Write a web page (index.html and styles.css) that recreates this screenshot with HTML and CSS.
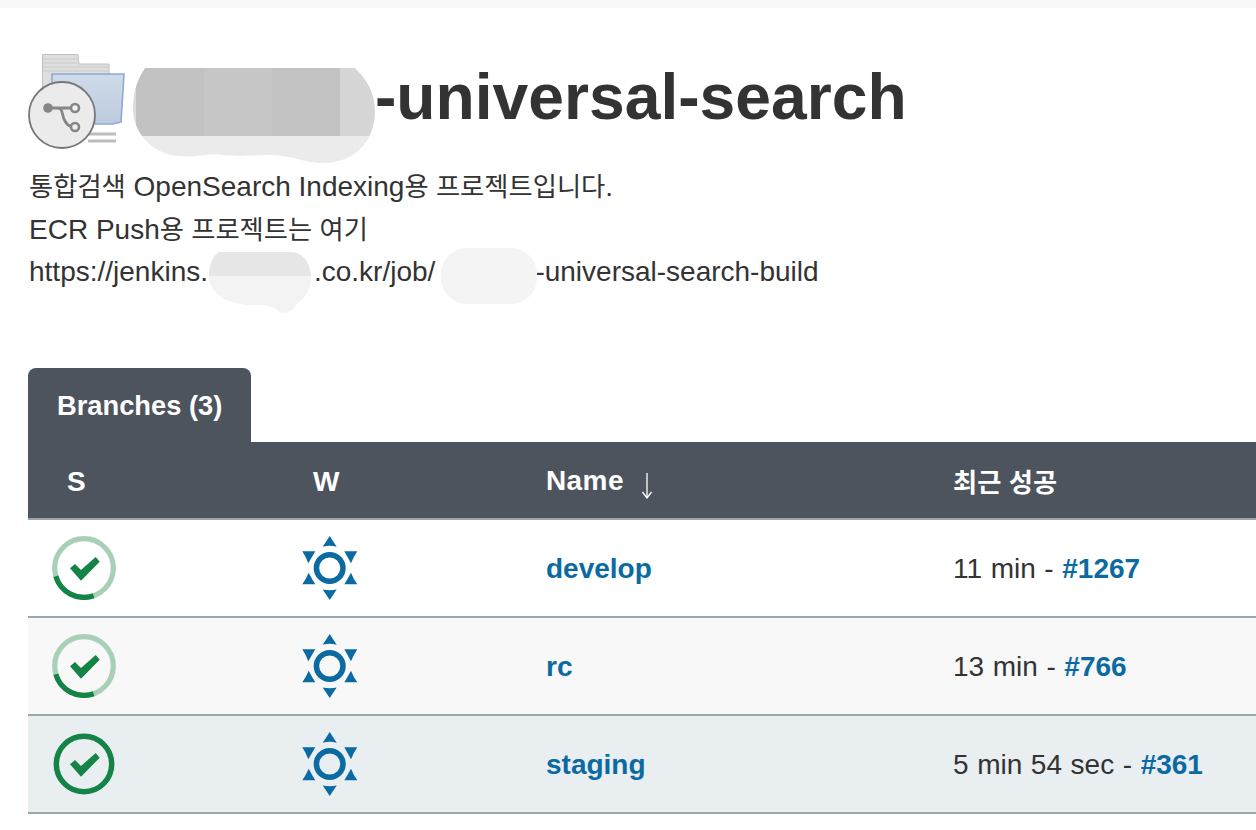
FILE: index.html
```html
<!DOCTYPE html>
<html lang="ko">
<head>
<meta charset="utf-8">
<title>universal-search</title>
<link rel="stylesheet" href="styles.css">
</head>
<body>
<div class="topbar"></div>
<main class="page">
  <h1 class="title">
    <span class="job-icon">
      <svg width="100" height="100" viewBox="0 0 100 100">
        <defs>
          <linearGradient id="fold" x1="0" y1="0" x2="0" y2="1"><stop offset="0" stop-color="#cfdbea"/><stop offset="1" stop-color="#bccbde"/></linearGradient>
        </defs>
        <path d="M14.500 4.500H50L51 14H81V50H14.500z" fill="#dedede" stroke="#c0c0c0"/>
        <path d="M15 9H49M15 13H49M15 17H80M15 21H80" stroke="#cbcbcb"/>
        <path d="M24 24H96L93 72L84 74H40L24 60z" fill="url(#fold)" stroke="#8fa9d6" stroke-width="1.600"/>
        <path d="M60 84H88M60 91H88" stroke="#bdbdbd" stroke-width="3"/>
        <circle cx="34" cy="65" r="33" fill="#ebebeb" stroke="#777" stroke-width="1.800"/>
        <path d="M20 58H47M29 58C36 58 33 65 37 71C39 75 43 77 47 77" fill="none" stroke="#868686" stroke-width="2.800"/>
        <circle cx="20" cy="58" r="4.800" fill="#868686"/>
        <circle cx="47" cy="58" r="4" fill="#f0f0f0" stroke="#868686" stroke-width="2.600"/>
        <circle cx="47" cy="77" r="4" fill="#f0f0f0" stroke="#868686" stroke-width="2.600"/>
      </svg>
    </span>
    <span class="redact-title">
      <svg width="242" height="114" viewBox="0 0 242 114">
        <defs>
          <clipPath id="blob"><path d="M12 18H222C234 30 242 42 242 62C242 86 226 113 190 113C170 113 160 105 135 105C120 105 110 107 90 105C70 103 65 108 45 106C20 104 0 84 0 58C0 42 4 30 12 18z"/></clipPath>
        </defs>
        <g clip-path="url(#blob)">
          <rect x="0" y="86" width="242" height="28" fill="#ebebeb"/>
          <rect x="3" y="18" width="68" height="68" fill="#c2c2c2"/>
          <rect x="71" y="18" width="68" height="68" fill="#c6c6c6"/>
          <rect x="139" y="18" width="68" height="68" fill="#c3c3c3"/>
          <rect x="207" y="18" width="35" height="68" fill="#d6d6d6"/>
          <rect x="0" y="18" width="3" height="68" fill="#dcdcdc"/>
        </g>
      </svg>
    </span><span class="title-text">-universal-search</span>
  </h1>
  <div class="desc">
    <p class="desc-line"><span class="ko">통합검색</span> OpenSearch Indexing<span class="ko">용 프로젝트입니다</span>.</p>
    <p class="desc-line">ECR Push<span class="ko">용 프로젝트는 여기</span></p>
    <p class="desc-line">https://jenkins.<span class="redact redact-a"><svg width="102" height="62" viewBox="0 0 102 62"><defs><clipPath id="ba"><path d="M10 0H82C94 0 102 12 102 26C102 42 92 48 88 52C84 60 76 62 70 60C66 55 60 53 44 53C22 53 0 44 0 24C0 12 4 4 10 0z"/></clipPath></defs><g clip-path="url(#ba)"><rect width="102" height="24" fill="#e6e6e6"/><rect y="24" width="102" height="38" fill="#f3f3f3"/></g></svg></span>.co.kr/job/<span class="redact redact-b"><svg width="96" height="56" viewBox="0 0 96 56"><rect width="96" height="56" rx="26" fill="#f4f4f4"/></svg></span>-universal-search-build</p>
  </div>
  <section class="panel">
    <div class="tab">Branches (3)</div>
    <table class="runs">
      <thead>
        <tr>
          <th class="col-s">S</th>
          <th class="col-w">W</th>
          <th class="col-n"><span class="name-head">Name</span> <svg class="sort" width="12" height="26" viewBox="0 0 12 26"><path d="M6 0V24M1.500 19L6 25L10.500 19" fill="none" stroke="#fff" stroke-width="1.300"/></svg></th>
          <th><span class="ko-head">최근 성공</span></th>
        </tr>
      </thead>
      <tbody>
        <tr class="row-plain">
          <td class="cell-icon"><svg class="status" width="64" height="64" viewBox="0 0 64 64"><circle cx="32" cy="32" r="29.300" fill="none" stroke="#a9d0b6" stroke-width="5.200"/><path d="M3.800 40.200A29.300 29.300 0 0 0 41.600 59.700" fill="none" stroke="#138347" stroke-width="5.200"/><path d="M18 32.300L23 28L29 34L43.700 21L47.700 25.700L29 44.700z" fill="#138347"/></svg></td>
          <td class="cell-icon cell-w"><svg width="56" height="64" viewBox="0 0 56 64"><circle cx="27.700" cy="32" r="13.300" fill="none" stroke="#0b6aa2" stroke-width="5.500"/><path d="M27.700 0L34.700 10.700Q27.700 9 20.700 10.700zM27.700 64L20.700 53.500Q27.700 55 34.700 53.500zM0.300 15.300H13.300Q10 21 6.300 27.300Q4 21 0.300 15.300zM55.300 15.300H42.300Q45.500 21 49 27.300Q51.500 21 55.300 15.300zM0.300 48.300H13.300Q10 43 6.700 36.700Q4 43 0.300 48.300zM55.300 48.300H42.300Q45.500 43 49 36.700Q51.500 43 55.300 48.300z" fill="#0b6aa2"/></svg></td>
          <td class="cell-text"><a class="link" href="#">develop</a></td>
          <td class="cell-text">11 min - <a class="link" href="#">#1267</a></td>
        </tr>
        <tr class="row-alt">
          <td class="cell-icon"><svg class="status" width="64" height="64" viewBox="0 0 64 64"><circle cx="32" cy="32" r="29.300" fill="none" stroke="#a9d0b6" stroke-width="5.200"/><path d="M3.800 40.200A29.300 29.300 0 0 0 41.600 59.700" fill="none" stroke="#138347" stroke-width="5.200"/><path d="M18 32.300L23 28L29 34L43.700 21L47.700 25.700L29 44.700z" fill="#138347"/></svg></td>
          <td class="cell-icon cell-w"><svg width="56" height="64" viewBox="0 0 56 64"><circle cx="27.700" cy="32" r="13.300" fill="none" stroke="#0b6aa2" stroke-width="5.500"/><path d="M27.700 0L34.700 10.700Q27.700 9 20.700 10.700zM27.700 64L20.700 53.500Q27.700 55 34.700 53.500zM0.300 15.300H13.300Q10 21 6.300 27.300Q4 21 0.300 15.300zM55.300 15.300H42.300Q45.500 21 49 27.300Q51.500 21 55.300 15.300zM0.300 48.300H13.300Q10 43 6.700 36.700Q4 43 0.300 48.300zM55.300 48.300H42.300Q45.500 43 49 36.700Q51.500 43 55.300 48.300z" fill="#0b6aa2"/></svg></td>
          <td class="cell-text"><a class="link" href="#">rc</a></td>
          <td class="cell-text">13 min - <a class="link" href="#">#766</a></td>
        </tr>
        <tr class="row-hi">
          <td class="cell-icon"><svg class="status" width="64" height="64" viewBox="0 0 64 64"><circle cx="32" cy="32" r="27.700" fill="none" stroke="#138347" stroke-width="5.500"/><path d="M18 32.300L23 28L29 34L43.700 21L47.700 25.700L29 44.700z" fill="#138347"/></svg></td>
          <td class="cell-icon cell-w"><svg width="56" height="64" viewBox="0 0 56 64"><circle cx="27.700" cy="32" r="13.300" fill="none" stroke="#0b6aa2" stroke-width="5.500"/><path d="M27.700 0L34.700 10.700Q27.700 9 20.700 10.700zM27.700 64L20.700 53.500Q27.700 55 34.700 53.500zM0.300 15.300H13.300Q10 21 6.300 27.300Q4 21 0.300 15.300zM55.300 15.300H42.300Q45.500 21 49 27.300Q51.500 21 55.300 15.300zM0.300 48.300H13.300Q10 43 6.700 36.700Q4 43 0.300 48.300zM55.300 48.300H42.300Q45.500 43 49 36.700Q51.500 43 55.300 48.300z" fill="#0b6aa2"/></svg></td>
          <td class="cell-text"><a class="link" href="#">staging</a></td>
          <td class="cell-text">5 min 54 sec - <a class="link" href="#">#361</a></td>
        </tr>
      </tbody>
    </table>
  </section>
</main>
</body>
</html>
```

FILE: styles.css
```css
* { box-sizing: border-box; }
html, body { margin: 0; padding: 0; }
body {
  background: #fff;
  color: #333;
  font-family: "Liberation Sans", "Noto Sans CJK KR", sans-serif;
  font-size: 28px;
  overflow: hidden;
  height: 830px;
}
.topbar { height: 8px; background: #f8f8f8; }
.page { padding: 42px 0 0 28px; }
.title {
  display: flex;
  align-items: center;
  height: 100px;
  margin: 0;
  font-size: 64.2px;
  font-weight: 700;
  line-height: 94px;
  color: #333;
}
.title-text { height: 94px; align-self: flex-start; }
.job-icon { width: 105px; height: 100px; flex: none; filter: blur(0.6px); }
.job-icon svg, .redact svg, .redact-title svg { display: block; }
.redact-title { width: 242px; height: 114px; flex: none; align-self: flex-start; }
.desc { margin-top: 16px; padding-left: 1px; }
.desc-line { margin: 0; height: 42.500px; line-height: 42.500px; }
.ko { font-size: 26.300px; }
.ko-head { font-size: 26.300px; position: relative; top: -1px; }
.redact { position: relative; display: inline-block; height: 1px; }
.redact svg { position: absolute; }
.redact-a { width: 106px; }
.redact-a svg { left: 1px; top: -28px; }
.redact-b { width: 100px; }
.redact-b svg { left: 6px; top: -32px; }
.panel { margin-top: 74px; }
.tab {
  width: 223px;
  height: 74px;
  padding: 21px 0 0 29px;
  background: #4d545d;
  border-radius: 8px 8px 0 0;
  color: #fff;
  font-size: 27.300px;
  font-weight: 700;
  line-height: 34px;
}
.runs {
  width: 1228px;
  table-layout: fixed;
  border-collapse: separate;
  border-spacing: 0;
}
.runs th {
  height: 78px;
  padding: 4px 0 0 39px;
  background: #4d545d;
  border-bottom: 2px solid #9aa5ae;
  color: #fff;
  font-size: 28px;
  font-weight: 700;
  text-align: left;
}
.col-s { width: 246px; }
.col-w { width: 233px; }
.col-n { width: 407px; }
.name-head { letter-spacing: 0.4px; }
.sort { margin-left: 9px; vertical-align: -9px; }
.runs td {
  height: 98px;
  padding: 0 0 0 39px;
  border-bottom: 2px solid #9aa5ae;
  font-size: 28px;
}
.runs td.cell-text { padding-top: 2px; word-spacing: 0.8px; }
.runs td.cell-icon { padding-left: 24px; line-height: 0; }
.runs td.cell-icon svg { display: block; }
.runs td.cell-w { padding-left: 28px; }
.row-alt td { background: #f8f8f8; }
.row-hi td { background: #e9eef1; }
.link { color: #0b6aa2; font-weight: 700; text-decoration: none; }
```
